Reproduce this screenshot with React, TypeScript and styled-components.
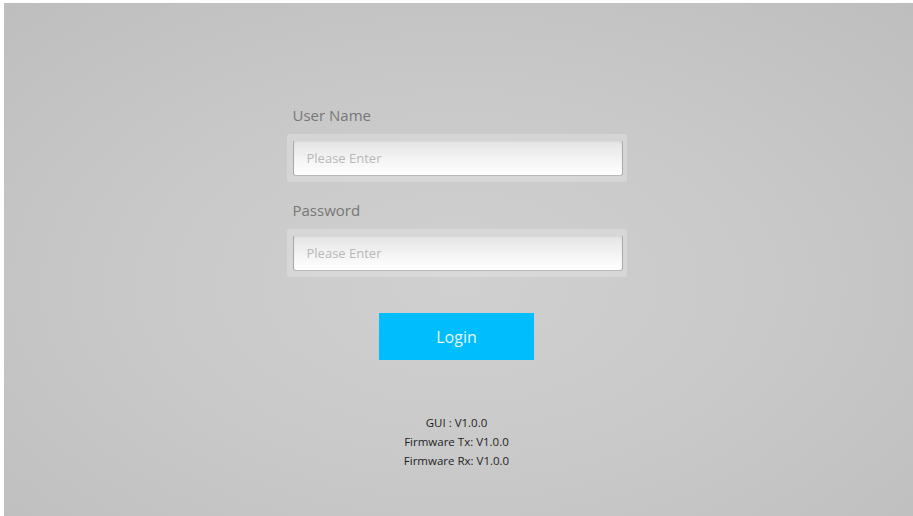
import React, { useState } from 'react';
import styled, { createGlobalStyle } from 'styled-components';

const GlobalStyle = createGlobalStyle`
  html, body {
    margin: 0;
    padding: 0;
    background: #ffffff;
  }
  body {
    font-family: "Open Sans", "Liberation Sans", sans-serif;
  }
  * {
    box-sizing: border-box;
  }
`;

const Page = styled.div`
  width: 100%;
  height: 516px;
  padding: 3px 0 0 4px;
  overflow: hidden;
`;

const Screen = styled.div`
  height: 100%;
  padding-right: 4px;
  display: flex;
  flex-direction: column;
  align-items: center;
  background: radial-gradient(ellipse 75% 80% at 50% 55%, #d0d0d0 0%, #c9c9c9 45%, #bdbdbd 100%);
`;

const Form = styled.form`
  width: 340px;
  margin-top: 102px;
  display: flex;
  flex-direction: column;
`;

const Field = styled.div<{ $gap?: number }>`
  display: flex;
  flex-direction: column;
  margin-top: ${(p) => p.$gap ?? 0}px;
`;

const Label = styled.label`
  font-size: 15px;
  line-height: 20px;
  color: #777777;
  padding-left: 6px;
  margin-bottom: 9px;
`;

const Frame = styled.div`
  padding: 6px 4px 6px 6px;
  background: rgba(255, 255, 255, 0.22);
  border-radius: 2px;
`;

const Input = styled.input`
  display: block;
  width: 100%;
  height: 36px;
  padding: 0 13px;
  border: 1px solid #b9b9b9;
  border-top-color: #d4d4d4;
  border-left-color: #a9a9a9;
  border-right-color: #a9a9a9;
  border-radius: 3px;
  background: linear-gradient(to bottom, #e4e4e4 0%, #f4f4f4 55%, #ffffff 100%);
  box-shadow: inset 0 1px 2px rgba(0, 0, 0, 0.06);
  font-family: "Open Sans", "Liberation Sans", sans-serif;
  font-size: 13px;
  color: #555;
  outline: none;

  &::placeholder {
    color: #b8b8b8;
  }
`;

const LoginButton = styled.button`
  align-self: center;
  width: 155px;
  height: 47px;
  margin-top: 36px;
  border: none;
  background: #00bdfd;
  color: #e6f7ff;
  font-family: "Open Sans", "Liberation Sans", sans-serif;
  font-size: 16px;
  cursor: pointer;
`;

const Versions = styled.div`
  margin-top: 53px;
  display: flex;
  flex-direction: column;
  align-items: center;
  font-size: 11.5px;
  line-height: 19px;
  color: #1e1e1e;
`;

const App = () => {
  const [user, setUser] = useState('');
  const [pass, setPass] = useState('');

  return (
    <>
      <GlobalStyle />
      <Page>
        <Screen>
          <Form onSubmit={(e) => e.preventDefault()}>
            <Field>
              <Label htmlFor="user">User Name</Label>
              <Frame>
                <Input id="user" placeholder="Please Enter" value={user} onChange={(e) => setUser(e.target.value)} />
              </Frame>
            </Field>
            <Field $gap={18}>
              <Label htmlFor="pass">Password</Label>
              <Frame>
                <Input id="pass" type="password" placeholder="Please Enter" value={pass} onChange={(e) => setPass(e.target.value)} />
              </Frame>
            </Field>
            <LoginButton type="submit">Login</LoginButton>
          </Form>
          <Versions>
            <span>GUI : V1.0.0</span>
            <span>Firmware Tx: V1.0.0</span>
            <span>Firmware Rx: V1.0.0</span>
          </Versions>
        </Screen>
      </Page>
    </>
  );
};

export default App;
